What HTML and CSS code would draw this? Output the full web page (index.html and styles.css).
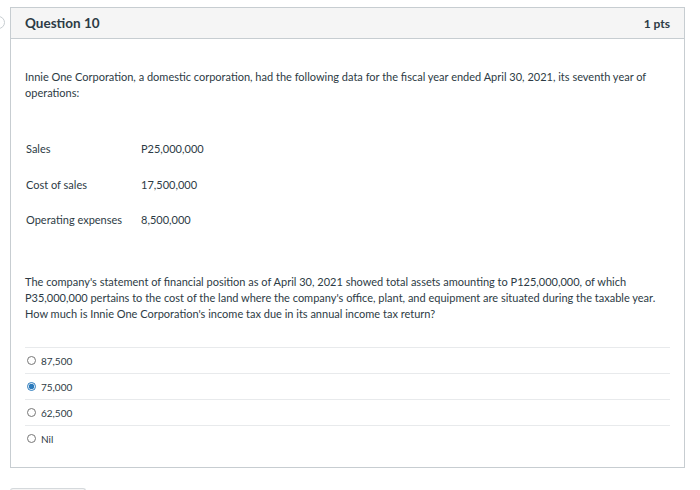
FILE: index.html
```html
<!DOCTYPE html>
<html lang="en">
<head>
    <meta charset="UTF-8">
    <title>Question 10</title>
    <link rel="stylesheet" href="styles.css">
</head>
<body>
    <div class="page">
        <span class="flag"></span>
        <div class="question">
            <div class="q-header">
                <h2>Question 10</h2>
                <span class="pts">1 pts</span>
            </div>
            <div class="q-body">
                <p class="intro">Innie One Corporation, a domestic corporation, had the following data for the fiscal year ended April 30, 2021, its seventh year of operations:</p>

                <table class="data">
                    <tr><td>Sales</td><td>P25,000,000</td></tr>
                    <tr><td>Cost of sales</td><td>17,500,000</td></tr>
                    <tr><td>Operating expenses</td><td>8,500,000</td></tr>
                </table>

                <p class="stem">The company's statement of financial position as of April 30, 2021 showed total assets amounting to P125,000,000, of which P35,000,000 pertains to the cost of the land where the company's office, plant, and equipment are situated during the taxable year. How much is Innie One Corporation's income tax due in its annual income tax return?</p>

                <div class="answers">
                    <label class="answer"><input type="radio" name="q10"> 87,500</label>
                    <label class="answer"><input type="radio" name="q10" checked> 75,000</label>
                    <label class="answer"><input type="radio" name="q10"> 62,500</label>
                    <label class="answer"><input type="radio" name="q10"> Nil</label>
                </div>
            </div>
        </div>
        <div class="next-btn"></div>
    </div>
</body>
</html>
```

FILE: styles.css
```css
body { margin: 0; font-family: Lato, "Open Sans", sans-serif; color: #2d3b45; background: #fff; }
.page { position: relative; padding: 7px 15px 0 10px; }
.flag { position: absolute; left: -8px; top: 16px; width: 11px; height: 11px; border: 1px solid #c7cdd1; border-radius: 50%; }
.question { border: 1px solid #c7cdd1; }
.q-header { display: flex; justify-content: space-between; align-items: center; height: 30px; padding: 0 14px 0 14px; background: #f5f5f5; border-bottom: 1px solid #c7cdd1; }
.q-header h2 { margin: 0; font-size: 13.5px; font-weight: bold; color: #2d3b45; }
.pts { font-size: 12px; font-weight: bold; }
.q-body { padding: 30px 14px 16px 14px; font-size: 11px; line-height: 16px; }
.intro { margin: 0 0 40px 0; }
.data { border-collapse: collapse; margin-bottom: 46px; }
.data td { padding: 0 14px 19.5px 1px; height: 16px; vertical-align: top; }
.data tr:last-child td { padding-bottom: 0; }
.data td:first-child { width: 100px; }
.stem { margin: 0 0 25px 0; }
.answers { border-top: 1px solid #e8eaec; }
.answer { display: flex; align-items: center; height: 25px; padding-left: 2px; border-bottom: 1px solid #e8eaec; font-size: 10px; }
.answer:last-child { border-bottom: none; }
.answer input { width: 9px; height: 9px; margin: 0 5px 0 0; accent-color: #2b7abc; }
.next-btn { width: 74px; height: 10px; margin-top: 20px; border: 1px solid #d5d9dc; border-bottom: none; border-radius: 3px 3px 0 0; background: #f5f5f5; }
```
